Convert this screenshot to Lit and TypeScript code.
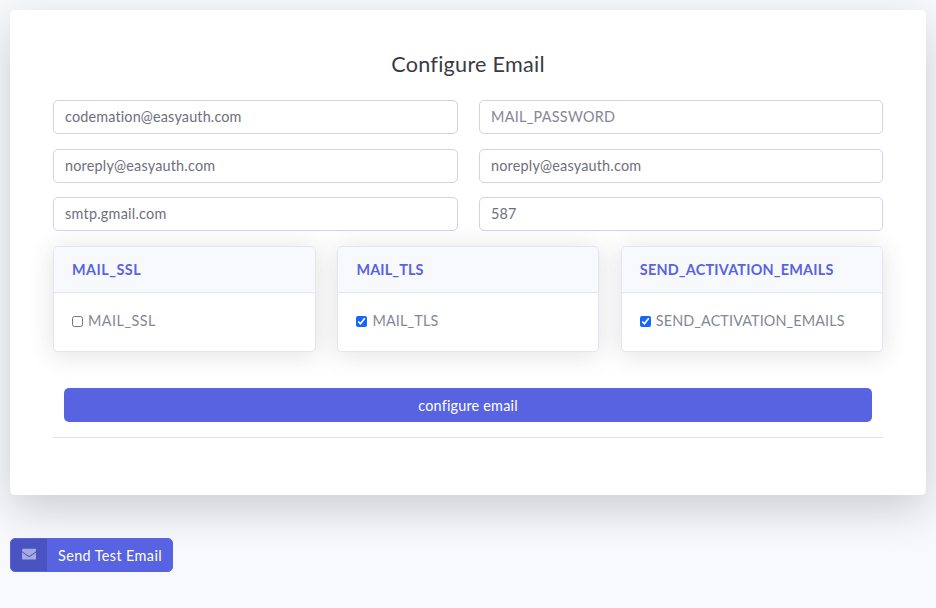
import { LitElement, html, css, svg } from "lit";
import { customElement } from "lit/decorators.js";

interface Field {
  value: string;
  placeholder: string;
  cls: string;
}

interface Toggle {
  name: string;
  checked: boolean;
  cls: string;
}

const fields: Field[] = [
  { value: "codemation@easyauth.com", placeholder: "MAIL_USERNAME", cls: "user" },
  { value: "", placeholder: "MAIL_PASSWORD", cls: "password" },
  { value: "noreply@easyauth.com", placeholder: "MAIL_FROM", cls: "from" },
  { value: "noreply@easyauth.com", placeholder: "MAIL_FROM_NAME", cls: "from" },
  { value: "smtp.gmail.com", placeholder: "MAIL_SERVER", cls: "server" },
  { value: "587", placeholder: "MAIL_PORT", cls: "port" },
];

const toggles: Toggle[] = [
  { name: "MAIL_SSL", checked: false, cls: "ssl" },
  { name: "MAIL_TLS", checked: true, cls: "tls" },
  { name: "SEND_ACTIVATION_EMAILS", checked: true, cls: "activation" },
];

const envelope = svg`<path fill="currentColor" d="M502.3 190.8c3.9-3.1 9.700-.2 9.700 4.700V400c0 26.500-21.500 48-48 48H48c-26.500 0-48-21.500-48-48V195.600c0-5 5.700-7.800 9.700-4.700 22.400 17.400 52.100 39.500 154.100 113.600 21.100 15.400 56.700 47.800 92.200 47.600 35.700.3 72-32.800 92.300-47.600 102-74.100 131.600-96.300 154-113.700zM256 320c23.200.4 56.600-29.200 73.400-41.400 132.700-96.300 142.800-104.700 173.400-128.700 5.800-4.500 9.200-11.500 9.200-18.900v-19c0-26.500-21.500-48-48-48H48c-26.500 0-48 21.500-48 48v19c0 7.400 3.400 14.300 9.200 18.900 30.600 23.900 40.700 32.400 173.400 128.700 16.800 12.200 50.200 41.800 73.400 41.400z"/>`;

@customElement("app-root")
export class AppRoot extends LitElement {
  static styles = css`
    :host {
      display: block;
      box-sizing: border-box;
      min-height: 100vh;
      padding: 10px 10px 0;
      overflow: hidden;
      background: #f8f9fc;
      color: #858796;
      font: 400 14.4px/21.6px Lato, "Open Sans", sans-serif;
    }
    * {
      box-sizing: border-box;
    }
    .panel {
      width: 916px;
      height: 485px;
      padding: 41px 43px 0;
      border-radius: 5px;
      background: #fff;
      box-shadow: 0 14.4px 43.2px rgba(0, 0, 0, 0.175);
    }
    h1 {
      margin: 0 0 23px;
      text-align: center;
      color: #3a3b45;
      font-size: 21.6px;
      line-height: 26px;
      font-weight: 400;
      letter-spacing: 0.27px;
    }
    .fields {
      display: grid;
      grid-template-columns: 405px 404px;
      gap: 14.6px 21px;
    }
    .field {
      display: block;
      width: 100%;
      height: 34px;
      padding: 0 11px 1px;
      border: 1px solid #d1d3e2;
      border-radius: 5px;
      background: #fff;
      color: #6e707e;
      font: inherit;
      outline: none;
    }
    .field::placeholder {
      color: #858796;
      opacity: 1;
    }
    .user {
      letter-spacing: 0.16px;
    }
    .password {
      letter-spacing: 0.28px;
    }
    .from {
      letter-spacing: 0.2px;
    }
    .server {
      letter-spacing: 0.25px;
    }
    .port {
      letter-spacing: 0.2px;
    }
    .toggles {
      display: grid;
      grid-template-columns: 263px 262px 262px;
      column-gap: 21.4px;
      margin-top: 15px;
    }
    .card {
      height: 106px;
      border: 1px solid #e3e6f0;
      border-radius: 5px;
      background: #fff;
      box-shadow: 0 2.16px 25.2px rgba(58, 59, 69, 0.15);
    }
    .card-head {
      height: 46px;
      padding: 12px 18px 0;
      border-bottom: 1px solid #e3e6f0;
      border-radius: 4px 4px 0 0;
      background: #f8f9fc;
      color: #5863e2;
      font-weight: 700;
    }
    .ssl {
      letter-spacing: 0.48px;
    }
    .tls {
      letter-spacing: 0.15px;
    }
    .activation .card-head {
      letter-spacing: 0.22px;
    }
    .activation .check {
      letter-spacing: 0.12px;
    }
    .check {
      display: flex;
      align-items: center;
      height: 56px;
      padding-left: 18px;
    }
    .check input {
      width: 11px;
      height: 11px;
      margin: 0 5px 0 0;
      accent-color: #1466ff;
    }
    .submit {
      display: block;
      width: 808px;
      height: 34px;
      margin: 36px 11px 15px;
      padding: 1px 0 0;
      border: 0;
      border-radius: 5px;
      background: #5863e2;
      color: #fff;
      font: inherit;
      letter-spacing: 0.2px;
    }
    .rule {
      height: 1px;
      background: #e2e2e6;
    }
    .send {
      display: flex;
      width: 163px;
      height: 34px;
      margin-top: 43px;
      padding: 0;
      border: 1px solid #5863e2;
      border-radius: 5px;
      overflow: hidden;
      background: #5863e2;
      color: #fff;
      font: inherit;
      letter-spacing: 0.4px;
    }
    .icon {
      display: flex;
      align-items: center;
      justify-content: center;
      width: 36px;
      height: 32px;
      padding-bottom: 1px;
      background: rgba(0, 0, 0, 0.15);
      color: rgba(255, 255, 255, 0.5);
    }
    .icon svg {
      width: 14.4px;
      height: 14.4px;
    }
    .send-label {
      padding-left: 11px;
      line-height: 33px;
      white-space: nowrap;
    }
  `;

  render() {
    return html`
      <main class="panel">
        <h1><span>Configure Email</span></h1>
        <div class="fields">
          ${fields.map(
            (f) => html`<input class="field ${f.cls}" .value=${f.value} placeholder=${f.placeholder} />`,
          )}
        </div>
        <div class="toggles">
          ${toggles.map(
            (t) => html`<section class="card ${t.cls}">
              <div class="card-head"><span>${t.name}</span></div>
              <label class="check"><input type="checkbox" .checked=${t.checked} /><span>${t.name}</span></label>
            </section>`,
          )}
        </div>
        <button class="submit"><span>configure email</span></button>
        <div class="rule"></div>
      </main>
      <button class="send">
        <span class="icon"><svg viewBox="0 0 512 512">${envelope}</svg></span>
        <span class="send-label">Send Test Email</span>
      </button>
    `;
  }
}
